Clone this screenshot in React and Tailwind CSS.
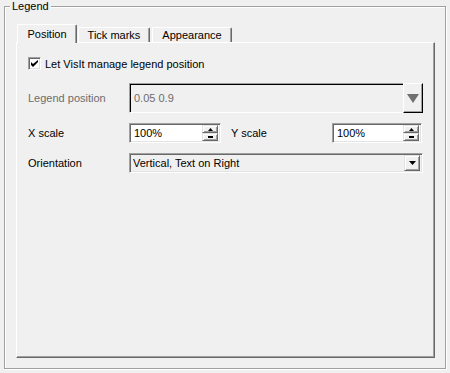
import React from "react";

const sunken =
  "border border-t-[#a0a0a0] border-l-[#a0a0a0] border-b-white border-r-white shadow-[inset_1px_1px_0_#696969,inset_-1px_-1px_0_#e3e3e3]";
const raised =
  "border border-t-[#e3e3e3] border-l-[#e3e3e3] border-b-[#696969] border-r-[#696969] shadow-[inset_1px_1px_0_#ffffff,inset_-1px_-1px_0_#a0a0a0] bg-[#f0f0f0]";

function SpinBox({ value, width }) {
  return (
    <div className={`${sunken} bg-white h-[20px] ${width} flex items-center pl-[4px] pr-[2px]`}>
      <span className="flex-1 leading-none pt-[1px]">{value}</span>
      <div className="flex flex-col w-[16px] h-[16px]">
        <div className={`${raised} h-[8px] flex items-center justify-center`}>
          <svg width="5" height="3" viewBox="0 0 5 3"><path d="M2.5 0 L5 3 L0 3 Z" fill="#000" /></svg>
        </div>
        <div className={`${raised} h-[8px] flex items-center justify-center`}>
          <svg width="5" height="2" viewBox="0 0 5 2"><path d="M0 0 L5 0 L5 2 L0 2 Z" fill="#000" /></svg>
        </div>
      </div>
    </div>
  );
}

export default function App() {
  return (
    <div className="w-[450px] h-[373px] bg-[#f0f0f0] font-['Liberation_Sans',Arial,sans-serif] text-[11px] text-black pt-[6px] pl-[4px] overflow-hidden">
      <div className="relative w-[442px] h-[363px] border border-[#a0a0a0] shadow-[inset_1px_1px_0_#ffffff,1px_1px_0_#ffffff]">
        <div className="absolute left-[5px] top-[-8px] px-[2px] bg-[#f0f0f0] leading-[14px]">Legend</div>

        <div className="ml-[11px] mt-[17px]">
          {/* tabs */}
          <div className="flex items-end h-[18px]">
            <div className="relative z-10 ml-[1px] w-[60px] h-[19px] -mb-[1px] bg-[#f0f0f0] border-l border-t border-white border-r border-r-[#696969] rounded-t-[2px] shadow-[inset_-1px_0_0_#a0a0a0] flex items-center justify-center pt-[1px]">
              Position
            </div>
            <div className="ml-[1px] w-[72px] h-[15px] border-l border-t border-white border-r border-r-[#696969] rounded-t-[2px] shadow-[inset_-1px_0_0_#a0a0a0] flex items-center justify-center pt-[1px]">
              Tick marks
            </div>
            <div className="ml-[2px] w-[80px] h-[15px] border-l border-t border-white border-r border-r-[#696969] rounded-t-[2px] shadow-[inset_-1px_0_0_#a0a0a0] flex items-center justify-center pt-[1px]">
              Appearance
            </div>
          </div>

          {/* pane */}
          <div className="w-[419px] h-[316px] border-t border-l border-white border-r border-r-[#696969] border-b border-b-[#696969] shadow-[inset_-1px_-1px_0_#a0a0a0] pl-[11px] pr-[11px] pt-[14px]">
            <div className="flex items-center h-[13px]">
              <div className={`${sunken} w-[13px] h-[13px] bg-white flex items-center justify-center`}>
                <svg width="7" height="7" viewBox="0 0 7 7">
                  <path d="M0 2 L0 5 L2 7 L7 2 L7 0 L2 4 Z" fill="#000" />
                </svg>
              </div>
              <span className="ml-[4px] pt-[2px]">Let VisIt manage legend position</span>
            </div>

            <div className="flex items-center h-[30px] mt-[13px]">
              <div className="w-[101px] text-[#6d6d6d] pt-[1px]">Legend position</div>
              <div className="flex-1 h-[30px] border border-t-[#a0a0a0] border-l-[#a0a0a0] border-b-white border-r-0 shadow-[inset_1px_1px_0_#000000] flex items-center pl-[4px] pt-[1px] text-[#6d6d6d]">
                0.05 0.9
              </div>
              <div className="w-[20px] h-[30px] border border-t-white border-l-white border-b-black border-r-black shadow-[inset_-1px_-1px_0_#a0a0a0] bg-[#f0f0f0] flex items-center justify-center">
                <svg width="12" height="9" viewBox="0 0 12 9"><path d="M0 0 L12 0 L6 9 Z" fill="#707070" /></svg>
              </div>
            </div>

            <div className="flex items-center h-[20px] mt-[10px]">
              <div className="w-[101px] pt-[1px]">X scale</div>
              <SpinBox value="100%" width="w-[92px]" />
              <div className="w-[111px] pl-[10px] pt-[1px]">Y scale</div>
              <SpinBox value="100%" width="w-[90px]" />
            </div>

            <div className="flex items-center h-[20px] mt-[10px]">
              <div className="w-[101px] pt-[1px]">Orientation</div>
              <div className={`${sunken} flex-1 h-[20px] bg-[#f0f0f0] flex items-center pl-[3px] pr-[2px]`}>
                <span className="flex-1 pt-[1px]">Vertical, Text on Right</span>
                <div className={`${raised} w-[16px] h-[16px] flex items-center justify-center`}>
                  <svg width="7" height="4" viewBox="0 0 7 4"><path d="M0 0 L7 0 L3.5 4 Z" fill="#000" /></svg>
                </div>
              </div>
            </div>
          </div>
        </div>
      </div>
    </div>
  );
}
